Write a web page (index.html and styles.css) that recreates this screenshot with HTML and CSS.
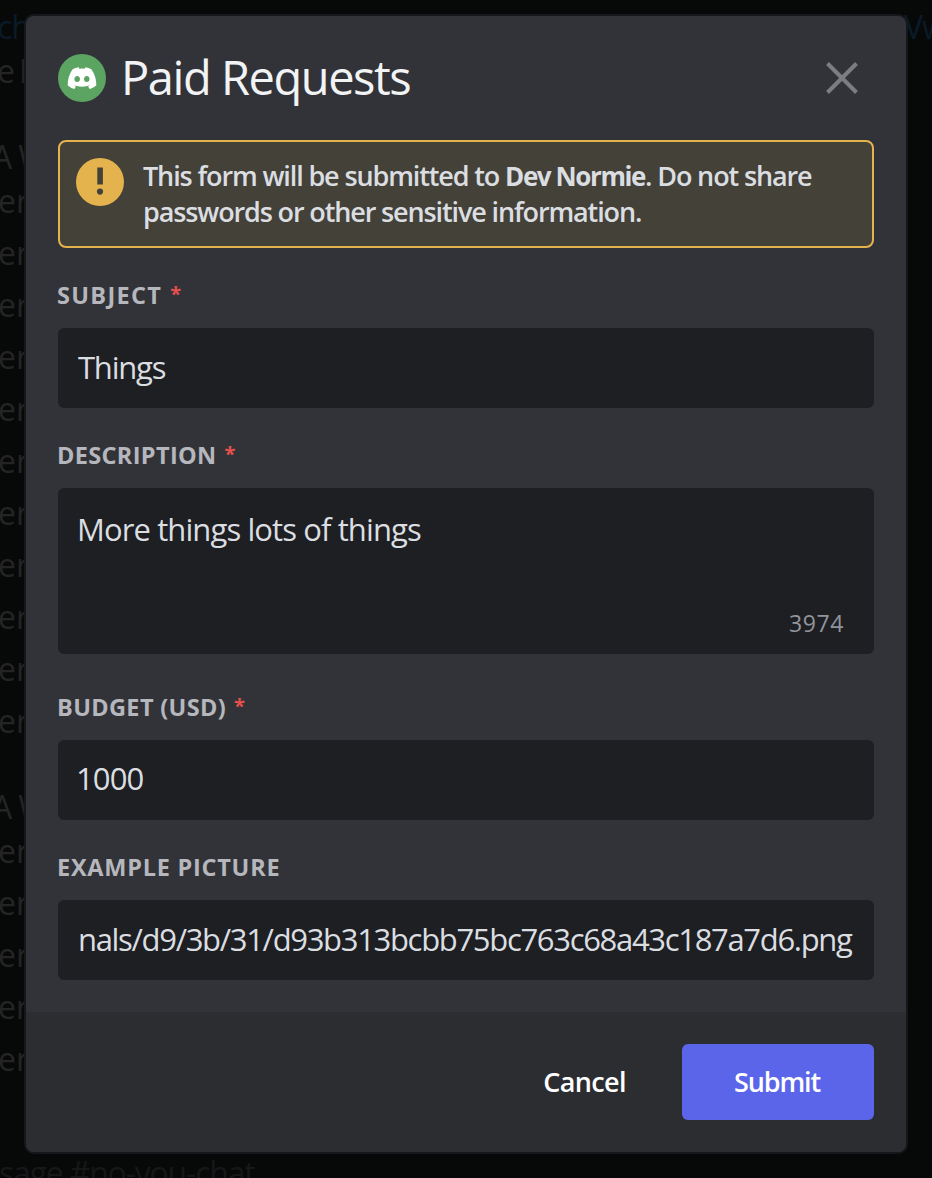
FILE: index.html
```
<!DOCTYPE html>
<html lang="en">
<head>
<meta charset="utf-8">
<title>Paid Requests</title>
<link rel="stylesheet" href="styles.css">
</head>
<body>
<div class="chat">
  <div class="line link"><span>ch</span><span class="link-end">Vw</span></div>
  <div class="line lead">e D</div>
  <div class="line heading">A W</div>
  <div class="line first">er</div>
  <div class="line item">er</div><div class="line item">er</div><div class="line item">er</div><div class="line item">er</div><div class="line item">er</div>
  <div class="line item">er</div><div class="line item">er</div><div class="line item">er</div><div class="line item">er</div><div class="line item">er</div>
  <div class="line heading">A W</div>
  <div class="line first">er</div>
  <div class="line item">er</div><div class="line item">er</div><div class="line item">er</div><div class="line item">er</div>
  <div class="line composer">sage #no-you-chat</div>
</div>
<form class="modal">
  <div class="body">
    <header class="header">
      <svg class="avatar" viewBox="0 0 48 48"><circle cx="24" cy="24" r="24" fill="#5ba462"/><path fill="#fff" fill-rule="evenodd" d="M20.6 13.3l.7 1.4q2.7-.4 5.4 0l.7-1.4q3.2.4 6 1.9 5.2 7.500 4.900 16.300-3.100 2.500-6.700 3.500l-1.500-2.600 2.100-1.200q-8.200 2.900-16.400 0l2.100 1.200-1.500 2.600q-3.600-1-6.700-3.500-.3-8.800 4.900-16.300 2.800-1.500 6-1.900zM19.200 21.900c-3.700 0-3.700 6.100 0 6.100s3.700-6.100 0-6.100zm9.600 0c-3.700 0-3.700 6.100 0 6.100s3.700-6.100 0-6.100z"/></svg>
      <h1 class="title">Paid Requests</h1>
      <svg class="close" viewBox="0 0 32 32"><path d="M1.500 1.500l29 29M30.500 1.500l-29 29" stroke="#7c7d82" stroke-width="4"/></svg>
    </header>
    <div class="notice">
      <svg class="warn" viewBox="0 0 48 48"><circle cx="24" cy="24" r="24" fill="#e5b34d"/><path d="M21.300 9.500h5.600v17h-5.600z" fill="#444139"/><circle cx="24" cy="33.600" r="3.100" fill="#444139"/></svg>
      <p class="notice-text">This form will be submitted to <b>Dev Normie</b>. Do not share<br>passwords or other sensitive information.</p>
    </div>
    <div class="label"><span class="label-subject">SUBJECT</span><span class="req">*</span></div>
    <div class="input short">Things</div>
    <div class="label"><span>DESCRIPTION</span><span class="req">*</span></div>
    <div class="input area"><span>More things lots of things</span><span class="count">3974</span></div>
    <div class="label budget"><span>BUDGET (USD)</span><span class="req">*</span></div>
    <div class="input number">1000</div>
    <div class="label"><span class="label-picture">EXAMPLE PICTURE</span></div>
    <div class="input url">nals/d9/3b/31/d93b313bcbb75bc763c68a43c187a7d6.png</div>
  </div>
  <footer class="footer">
    <span class="cancel">Cancel</span>
    <span class="submit">Submit</span>
  </footer>
</form>
</body>
</html>
```
FILE: styles.css
```
* { box-sizing: border-box; }
body {
  margin: 0;
  width: 932px;
  height: 1178px;
  overflow: hidden;
  display: grid;
  background: #070908;
  font-family: "Open Sans", "Noto Sans", sans-serif;
}
.chat, .modal { grid-area: 1 / 1; }
.chat {
  height: 1178px;
  overflow: hidden;
  padding-top: 5px;
  color: #242425;
  font-size: 32px;
  letter-spacing: -1.2px;
}
.line { height: 44px; line-height: 44px; white-space: nowrap; margin-left: -3px; }
.line.lead { word-spacing: -2px; }
.line.link { display: flex; justify-content: space-between; color: #0b1a28; margin-left: -3px; }
.link-end { width: 28px; }
.line.heading { margin: 42px 0 0 -8px; font-weight: 500; }
.line.first, .line.item { margin-left: -2px; letter-spacing: 0; }
.line.item { margin-top: 8px; }
.line.composer { margin: 70px 0 0 -1px; color: #151718; }
.modal {
  align-self: start;
  width: 880px;
  height: 1136px;
  margin: 16px 0 0 26px;
  display: flex;
  flex-direction: column;
  border-radius: 8px;
  background: #323338;
  box-shadow: 0 0 0 2px #16171a;
  overflow: hidden;
}
.body { height: 996px; padding: 38px 32px 0; }
.header { height: 48px; display: flex; align-items: center; }
.avatar { width: 48px; height: 48px; }
.title {
  flex: 1;
  margin: 0 0 2px 15px;
  color: #f2f3f5;
  font-size: 47px;
  line-height: 48px;
  font-weight: 400;
  letter-spacing: -1.45px;
}
.close { width: 32px; height: 32px; margin-right: 16px; }
.notice {
  display: flex;
  height: 108px;
  margin-top: 38px;
  padding: 16px;
  border: 2px solid #e5b34d;
  border-radius: 8px;
  background: #444139;
}
.warn { width: 48px; height: 48px; flex: none; }
.notice-text {
  margin: 0 0 0 19px;
  color: #dbdee1;
  font-size: 27px;
  line-height: 36px;
  font-weight: 600;
  letter-spacing: -1.13px;
  white-space: nowrap;
}
.notice-text b { font-weight: 700; font-size: 26px; letter-spacing: -1.4px; }
.label {
  display: flex;
  height: 32px;
  margin: 32px 0 16px -1px;
  line-height: 30px;
  font-size: 23.5px;
  font-weight: 700;
  letter-spacing: .35px;
  color: #b5b7bd;
}
.label-subject { letter-spacing: 1.3px; }
.label-picture { letter-spacing: .75px; }
.label.budget { margin-top: 38px; }
.req { margin-left: 8px; color: #e5504d; font-size: 20px; line-height: 27px; }
.input {
  height: 80px;
  padding: 0 20px;
  border-radius: 6px;
  background: #1e1f23;
  color: #dbdee1;
  font-size: 31px;
  line-height: 78px;
  letter-spacing: -.9px;
  white-space: nowrap;
}
.input.short { letter-spacing: -1.2px; }
.input.number { padding-left: 18px; line-height: 76px; }
.input.url { letter-spacing: -1.32px; }
.area {
  height: 166px;
  display: flex;
  flex-direction: column;
  padding: 19px 30px 15px 19px;
  line-height: 44px;
  justify-content: space-between;
}
.count { align-self: flex-end; font-size: 23px; line-height: 32px; letter-spacing: .6px; color: #92949b; }
.footer {
  height: 140px;
  display: flex;
  align-items: center;
  justify-content: flex-end;
  padding: 0 32px;
  background: #2c2d31;
  color: #fff;
  font-size: 27px;
  font-weight: 600;
  letter-spacing: -.6px;
}
.cancel { margin-right: 56px; line-height: 76px; }
.submit {
  width: 192px;
  height: 76px;
  line-height: 76px;
  padding-right: 2px;
  text-align: center;
  border-radius: 6px;
  letter-spacing: -1.1px;
  background: #5b65ea;
}
```
